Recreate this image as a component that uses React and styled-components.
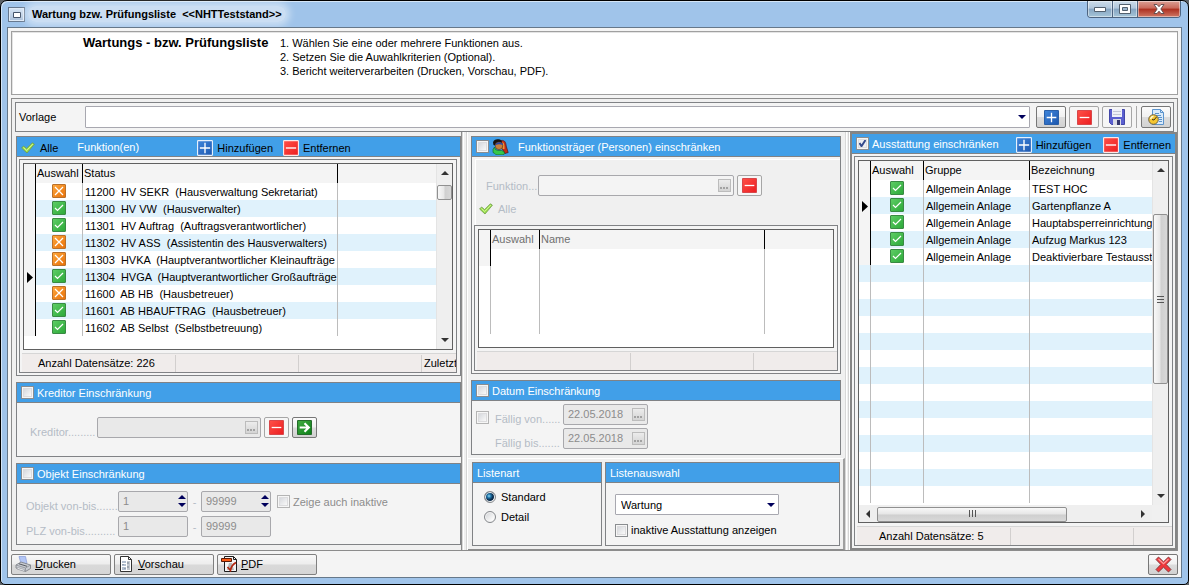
import React, { useState } from "react";
import styled, { createGlobalStyle, css } from "styled-components";

const c = {
  blue: "#419fe8",
  frame: "#a0c4ea",
  line: "#808285",
  panel: "#f4f4f4",
  face: "#f0f0f0",
  stripe: "#e0f2fc",
  off: "#b4bcc6",
};

const GlobalStyle = createGlobalStyle`
  *, *::before, *::after { box-sizing: border-box; }
  html { background: #5c6166; }
  body { margin: 0; color: #000; font: 11px/14px "Liberation Sans", Arial, sans-serif; }
  button, input, select { font: inherit; color: inherit; margin: 0; }
  button { cursor: default; }
`;

/* ---------- window frame ---------- */

const Window = styled.div`
  display: flex;
  flex-direction: column;
  min-height: 100vh;
  padding: 0 6px 6px;
  background: ${c.frame};
  border: 1px solid #000;
  border-radius: 7px 7px 5px 5px;
  box-shadow: inset 1px 1px 0 #d5e6f7;
`;

const TitleBar = styled.header`
  display: flex;
  align-items: flex-start;
  height: 26px;
`;

const SystemButton = styled.button`
  width: 17px;
  height: 15px;
  margin: 6px 3px 0 1px;
  padding: 0;
  display: grid;
  place-items: center;
  border: 1px solid #66788f;
  background: linear-gradient(#d8e6f5, #a9bfd9);
  box-shadow: inset 0 0 0 1px #dfeaf6;
`;

const Title = styled.h1`
  margin: 5px 0 0;
  padding: 0 4px;
  font-size: 11px;
  line-height: 16px;
  white-space: pre;
  border-radius: 8px;
  background: rgba(255, 255, 255, 0.45);
  box-shadow: 0 0 7px 4px rgba(255, 255, 255, 0.45);
`;

const WindowButtons = styled.div`
  display: flex;
  margin-left: auto;
  margin-right: 1px;
  border: 1px solid #4d6480;
  border-top: 0;
  border-radius: 0 0 4px 4px;
  overflow: hidden;
`;

const WindowButton = styled.button`
  width: ${(p) => (p.$danger ? 42 : 25)}px;
  height: 16px;
  padding: 0;
  display: grid;
  place-items: center;
  border: 0;
  border-right: ${(p) => (p.$danger ? 0 : 1)}px solid #4d6480;
  background: ${(p) =>
    p.$danger
      ? "linear-gradient(#dba095, #c9695a 45%, #ad2f1f 50%, #cf7865)"
      : "linear-gradient(#ccdcea, #b1c7dc 45%, #86a5c2 50%, #a5c5d8)"};
  box-shadow: inset 0 0 0 1px rgba(255, 255, 255, 0.45);
`;

const Client = styled.main`
  flex: 1;
  display: flex;
  flex-direction: column;
  padding: 3px 3px 2px;
  background: ${c.panel};
  border: 1px solid #66788a;
`;

/* ---------- intro and template row ---------- */

const Intro = styled.section`
  display: flex;
  min-height: 64px;
  padding: 4px 0 0 71px;
  background: #fff;
  border: 1px solid #a0a0a0;
  box-shadow: inset 1px 1px 0 #e4e4e4;
`;

const IntroTitle = styled.h2`
  flex: none;
  width: 197px;
  margin: 0;
  font-size: 13px;
  line-height: 14px;
`;

const Steps = styled.ol`
  margin: 0;
  padding: 0;
  list-style: none;
`;

const Workspace = styled.div`
  flex: 1;
  display: flex;
  flex-direction: column;
  margin-top: 3px;
  border: 1px solid #8c8c8c;
  background: ${c.face};
`;

const TemplateRow = styled.div`
  display: flex;
  align-items: center;
  gap: 3px;
  height: 30px;
  margin: 3px 3px 0;
  padding: 0 2px 0 3px;
  background: ${c.panel};
  border: 1px solid ${c.line};
`;

const TemplateLabel = styled.label`
  flex: none;
  width: 63px;
`;

const SelectBox = styled.div`
  position: relative;
  display: flex;
  ${(p) => p.$grow && "flex: 1; margin-right: 3px;"}
  width: ${(p) => (p.$grow ? "auto" : "164px")};
  height: ${(p) => (p.$grow ? 22 : 21)}px;

  &::after {
    content: "";
    position: absolute;
    right: 4px;
    top: 9px;
    border: 4px solid transparent;
    border-top-color: #00005c;
    border-bottom: 0;
    pointer-events: none;
  }
`;

const Select = styled.select`
  appearance: none;
  width: 100%;
  padding: 0 16px 0 5px;
  background: #fff;
  border: 1px solid #a8a8b0;
  border-radius: 1px;
`;

const Rule = styled.span`
  width: 1px;
  height: 22px;
  margin: 0 1px;
  background: #a8a8a8;
`;

const IconButton = styled.button`
  flex: none;
  width: ${(p) => (p.$wide ? 30 : 25)}px;
  height: ${(p) => (p.$wide ? 22 : 21)}px;
  padding: 0;
  display: grid;
  place-items: center;
  border: 1px solid ${(p) => (p.$strong ? "#777" : "#a6a6a6")};
  border-radius: 2px;
  background: ${(p) =>
    p.$strong ? "linear-gradient(#fbfbfb, #f1f1f1 48%, #dcdcdc 52%, #d2d2d2)" : "#f6f6f6"};
`;

/* ---------- panes and groups ---------- */

const Panes = styled.div`
  flex: 1;
  display: grid;
  grid-template-columns: minmax(0, 450fr) 6px minmax(0, 377fr) 5px minmax(0, 327fr);
`;

const LeftPane = styled.div`
  display: flex;
  flex-direction: column;
  gap: 6px;
  padding: 4px 0 3px 4px;
  border-right: 1px solid #8c8c8c;
`;

const Splitter = styled.div`
  background: ${c.face};
  border-left: 1px solid #d8d8d8;
  border-right: 1px solid #fff;
  box-shadow: inset 1px 0 0 #fff, inset -1px 0 0 #d4d4d4;
`;

const MiddlePane = styled.div`
  display: flex;
  flex-direction: column;
  gap: 6px;
  padding: 4px 4px 0 3px;
`;

const RightPane = styled.div`
  display: flex;
  flex-direction: column;
  border: 2px solid #858585;
  background: ${c.panel};
`;

const Group = styled.section`
  display: flex;
  flex-direction: column;
  background: ${c.panel};
  border: ${(p) => (p.$bare ? 0 : 1)}px solid ${c.line};
  ${(p) => p.$grow && "flex: 1;"}
  ${(p) => p.$h && `min-height: ${p.$h}px;`}
`;

const GroupHead = styled.div`
  display: flex;
  align-items: center;
  flex: none;
  height: 20px;
  padding-left: 4px;
  color: #fff;
  background: ${c.blue};
  border-bottom: 1px solid ${c.line};
  white-space: nowrap;
`;

const HeadLabel = styled.label`
  display: flex;
  padding-left: ${(p) => p.$gap ?? 3}px;
  line-height: 16px;
`;

const HeadText = styled.span`
  width: ${(p) => (p.$wide ? "120px" : "auto")};
  margin-left: ${(p) => (p.$wide ? 19 : 0)}px;
`;

const HeadButton = styled.button`
  display: flex;
  align-items: center;
  flex: none;
  gap: ${(p) => p.$gap ?? 4}px;
  height: 17px;
  margin-top: 2px;
  padding: 0;
  border: 0;
  background: none;
  color: #000;
`;

const HeadActions = styled.div`
  display: flex;
  gap: ${(p) => (p.$end ? 12 : 10)}px;
  margin-left: ${(p) => (p.$end ? "auto" : "0")};
  margin-right: 4px;
`;

const ListFrame = styled.div`
  flex: 1;
  display: flex;
  flex-direction: column;
  margin: ${(p) => p.$m ?? "2px 3px 2px 2px"};
  padding: 3px 0 0 3px;
  border: 1px solid ${c.line};
  background: ${c.panel};
`;

const ListBox = styled.div`
  flex: 1;
  display: grid;
  grid-template-columns: minmax(0, 1fr) auto;
  grid-template-rows: 1fr auto;
  min-height: ${(p) => p.$h}px;
  margin-right: 3px;
  border: 1px solid #606060;
  background: #fff;
`;

const StatusBar = styled.div`
  display: flex;
  flex: none;
  height: 19px;
  margin: 3px 0 0 -1px;
  padding-top: 1px;
  overflow: hidden;
  border-top: 1px solid #d6d6d6;
  background: #f0eceb;
`;

const StatusCell = styled.span`
  flex: none;
  width: ${(p) => p.$w}px;
  padding-left: ${(p) => p.$pad ?? 0}px;
  line-height: 17px;
  border-right: 1px solid #d2cfce;
  white-space: nowrap;
`;

/* ---------- data tables ---------- */

const Table = styled.table`
  width: 100%;
  align-self: start;
  table-layout: fixed;
  border-collapse: separate;
  border-spacing: 0;
`;

const Th = styled.th`
  height: 19px;
  padding: 0 0 1px ${(p) => (p.$mark ? 0 : 1)}px;
  font-weight: normal;
  text-align: left;
  line-height: 16px;
  white-space: nowrap;
  overflow: hidden;
  color: ${(p) => (p.$off ? "#707070" : "#000")};
  background: ${c.panel};
  border-right: ${(p) => (p.$last ? 0 : 1)}px solid #000;
`;

const Row = styled.tr`
  background: ${(p) => (p.$odd ? c.stripe : "#fff")};
`;

const Td = styled.td`
  height: 17px;
  padding: ${(p) => (p.$pad ? "2px 0 0 2px" : "0")};
  line-height: 15px;
  vertical-align: top;
  white-space: pre;
  overflow: hidden;
  border-right: ${(p) => (p.$last ? 0 : 1)}px solid #bcbcbc;
  ${(p) =>
    p.$mark &&
    css`
      vertical-align: middle;
      background: ${c.panel};
      border-right-color: #000;
    `}

  svg { display: block; margin: 1px auto 0; }
`;

/* ---------- scroll bars ---------- */

const VScroll = styled.div`
  width: 16px;
  display: flex;
  flex-direction: column;
  align-items: center;
  background: #efefef;
  border-left: 1px solid #e4e4e4;
`;

const HScroll = styled.div`
  display: flex;
  height: 17px;
  padding-top: 1px;
  align-items: center;
  background: #efefef;
`;

const Corner = styled.div`
  background: #f0f0f0;
`;

const Arrow = styled.button`
  flex: none;
  width: ${(p) => (p.$h ? 18 : 15)}px;
  height: ${(p) => (p.$h ? 15 : 18)}px;
  padding: 0;
  display: grid;
  place-items: center;
  border: 0;
  background: none;
`;

const Thumb = styled.div`
  flex: none;
  display: grid;
  place-items: center;
  border: 1px solid #909090;
  border-radius: 2px;
  ${(p) =>
    p.$h
      ? "width: 190px; height: 15px; background: linear-gradient(#f8f8f8, #e6e6e6 48%, #cfcfcf 52%, #d8d8d8);"
      : `width: 15px; height: ${p.$len}px; background: linear-gradient(90deg, #f8f8f8, #e6e6e6 48%, #cfcfcf 52%, #d8d8d8);`}
`;

const Space = styled.div`
  flex: ${(p) => (p.$size ? "none" : 1)};
  height: ${(p) => p.$size ?? 0}px;
`;

/* ---------- form parts ---------- */

const Check = styled.input.attrs({ type: "checkbox" })`
  appearance: none;
  flex: none;
  width: 13px;
  height: 13px;
  margin: 0;
  border: 1px solid ${(p) => (p.disabled ? "#b4b4b4" : "#8a8d90")};
  background: linear-gradient(135deg, #cdd0d6, #f8f8f8 80%);
  box-shadow: inset 0 0 0 1px #f6f6f6, inset 0 0 0 2px #dcdcde;

  &:checked {
    background: url("data:image/svg+xml,%3Csvg xmlns='http://www.w3.org/2000/svg' viewBox='0 0 11 11'%3E%3Cpath d='M2.5 5l2 3.2L8.5 2' fill='none' stroke='%23344a8c' stroke-width='2'/%3E%3C/svg%3E") center / 11px 11px no-repeat, #eceef2;
  }
`;

const Radio = styled.input.attrs({ type: "radio" })`
  appearance: none;
  flex: none;
  width: 12px;
  height: 12px;
  margin: 0;
  border: 1px solid #85888c;
  border-radius: 50%;
  background: linear-gradient(135deg, #cfd1d4, #fafafa 75%);
  box-shadow: inset 0 0 0 1px #f4f4f4;

  &:checked {
    background: radial-gradient(circle at 4px 4px, #8fdcf6 0, #1c6fa4 2px, #0b2c4c 4px, #0b2c4c 5px, #f4f4f4 6px);
  }
`;

const Line = styled.div`
  display: flex;
  align-items: center;
  height: 21px;
  color: ${(p) => (p.$off ? c.off : "inherit")};
`;

const Body = styled.div`
  display: flex;
  flex-direction: column;
  gap: ${(p) => p.$gap ?? 3}px;
  padding: ${(p) => p.$p};
`;

const FieldLabel = styled.label`
  flex: none;
  width: ${(p) => p.$w}px;
  padding-top: ${(p) => (p.$level ? 0 : 8)}px;
  white-space: nowrap;
`;

const Option = styled.label`
  display: flex;
  align-items: center;
  gap: ${(p) => p.$gap ?? 3}px;
  height: 20px;
  color: ${(p) => (p.$off ? "#8c8c8c" : "inherit")};
`;

const LeadCell = styled.div`
  display: flex;
  align-items: center;
  flex: none;
  width: 19px;
  padding-top: 5px;
`;

const Field = styled.div`
  position: relative;
  flex: none;
  width: ${(p) => p.$w}px;
  height: 21px;
  margin-right: ${(p) => p.$mr ?? 0}px;
`;

const Input = styled.input`
  width: 100%;
  height: 100%;
  padding: 0 4px 1px;
  color: #8c8c8c;
  background: ${(p) => (p.$light ? c.panel : "#e9e9e9")};
  border: 1px solid #a8a8ac;
  border-radius: 2px;
`;

const Ellipsis = styled.button`
  position: absolute;
  right: 3px;
  top: 4px;
  width: 13px;
  height: 13px;
  padding: 0;
  display: flex;
  align-items: flex-end;
  justify-content: center;
  border: 1px solid #bcbcbc;
  background: linear-gradient(#ececec, #d4d4d4);
`;

const Spinner = styled.div`
  position: absolute;
  right: 2px;
  top: 2px;
  display: flex;
  flex-direction: column;

  button {
    width: 9px;
    height: 8px;
    padding: 0;
    display: grid;
    place-items: center;
    border: 0;
    background: none;
  }
`;

const Dash = styled.span`
  flex: none;
  width: 13px;
  text-align: center;
`;

const FilterPanel = styled.div`
  flex: none;
  height: 66px;
  margin: 2px 0 0 3px;
  padding: 15px 0 0 10px;
  background: ${c.face};
  border: 1px solid #fff;
  border-right: 0;
  border-bottom: 0;
`;

const CheckAll = styled.button`
  display: flex;
  align-items: center;
  gap: 5px;
  margin: 6px 0 0 -7px;
  padding: 0;
  border: 0;
  background: none;
  color: ${c.off};
`;

const LowerRow = styled.div`
  flex: 1;
  display: grid;
  grid-template-columns: 130px minmax(0, 1fr);
  gap: 3px;
  margin: -3px -4px 0 -3px;
  padding: 3px 3px 3px 4px;
  border-top: 1px solid #fff;
  border-right: 2px solid #a0a0a0;
  border-bottom: 1px solid #8c8c8c;
`;

const Footer = styled.footer`
  display: flex;
  gap: 3px;
  padding-top: 3px;
`;

const ActionButton = styled.button`
  display: flex;
  align-items: center;
  gap: 3px;
  width: 100px;
  height: 21px;
  padding: 0 3px 1px;
  border: 1px solid #808080;
  border-radius: 2px;
  background: linear-gradient(#f8f8f8, #ededed 48%, #d9d9d9 52%, #d6d6d6);
`;

const CloseButton = styled(IconButton)`
  height: 21px;
  margin-left: auto;
`;

/* ---------- icons ---------- */

const Tile = ({ size = 14, from, to, edge, children }) => {
  const id = `t${from.slice(1)}`;
  return (
    <svg width={size} height={size} viewBox="0 0 14 14" aria-hidden="true">
      <defs>
        <linearGradient id={id} x1="0" y1="0" x2="1" y2="1">
          <stop offset="0" stopColor={from} />
          <stop offset="1" stopColor={to} />
        </linearGradient>
      </defs>
      <rect x="0.5" y="0.5" width="13" height="13" rx="0.5" fill={`url(#${id})`} stroke={edge} />
      <g fill="none" stroke="#fff" strokeWidth="1.2">{children}</g>
    </svg>
  );
};
const CrossTile = () => (
  <Tile from="#ffa83c" to="#e87008" edge="#b9702a"><path d="M3 3l8 8M11 3l-8 8" /></Tile>
);
const TickTile = () => (
  <Tile from="#5fce66" to="#2ba838" edge="#3a8a44"><path d="M3 7l2.500 2.500L11 4" /></Tile>
);
const PlusTile = ({ framed }) => (
  <Tile size={framed ? 16 : 15} from="#3f86dc" to="#1d57ae" edge={framed ? "#e6f0fb" : "#2a5fa8"}>
    <path d="M7 2.500v9M2.500 7h9" />
  </Tile>
);
const MinusTile = ({ framed }) => (
  <Tile size={framed ? 16 : 15} from="#ff5148" to="#ec1c20" edge={framed ? "#fbe8e8" : "#d8474a"}>
    <path d="M2.500 7h9" />
  </Tile>
);
const ArrowTile = () => (
  <Tile size={15} from="#43ad43" to="#0b7f17" edge="#256b2b">
    <path d="M2.500 7h8M7 3l4 4-4 4" strokeWidth="2" />
  </Tile>
);
const Tick = () => (
  <svg width="14" height="12" viewBox="0 0 14 12" aria-hidden="true">
    <path d="M0.600 6l2-2 3 2.600L11.400 0.800l2 1.400L6 11z" fill="#9be04c" stroke="#6f9a4c" strokeWidth="0.800" />
    <path d="M2.500 5.500l3.200 3L11.800 2" fill="none" stroke="#d2f49a" />
  </svg>
);
const Disk = () => (
  <svg width="16" height="16" viewBox="0 0 16 16" aria-hidden="true">
    <path d="M0.500 0.500h15v15h-13l-2-2z" fill="#5a5fd0" stroke="#4347a8" />
    <path d="M3 0h10v8H3z" fill="#eef0f8" />
    <path d="M4 2.500h8M4 5.500h8" stroke="#c4c7d6" />
    <path d="M4 10h8v6H4z" fill="#d9dbe6" />
    <path d="M8 11h3v5H8z" fill="#34366e" />
  </svg>
);
const Report = () => (
  <svg width="17" height="16" viewBox="0 0 17 16" aria-hidden="true">
    <path d="M4.500 0.500h8l3 3v12h-11z" fill="#d9eafa" stroke="#5b93cc" />
    <path d="M12.500 0.500v3h3M7 4.500h4M7 6.500h6M10 8.500h4M11 10.500h3M11 12.500h3" fill="none" stroke="#5b93cc" />
    <circle cx="5.500" cy="10.500" r="4.800" fill="#f5c630" stroke="#6e6244" />
    <path d="M8.500 8l-2.500 3-2-.500" fill="none" stroke="#3c3320" />
    <path d="M2.500 10a4 4 0 0 1 3-2.800" fill="none" stroke="#fff8d8" strokeWidth="1.400" />
  </svg>
);
const People = () => (
  <svg width="17" height="16" viewBox="0 0 17 16" aria-hidden="true">
    <path d="M9 1.500c4-.800 5 2.500 5.200 5.500l2 6.500-3.200 1-3-5z" fill="#c22a17" stroke="#3e0f08" strokeWidth="0.600" />
    <path d="M10.500 3c2 1 2 3.500 2 7h-2z" fill="#e8973c" />
    <path d="M1 3.500C1.500 0.500 4 0 6.500 0.200c2.500 0 3.500 1.800 3.500 3.800L3 6.500 1.500 6z" fill="#17130f" />
    <circle cx="7" cy="6.800" r="3.800" fill="#c8803c" stroke="#543016" strokeWidth="0.600" />
    <path d="M3.500 5c2-2.300 5.500-2.300 7.500 0v1c-2.500-1-5-1-7.500 0z" fill="#2d49a6" />
    <path d="M2.500 8l1 2.500 2.500 1h3.500l2.500 1 .500 2.500-1.500.800H4l-1.500-1.500-1.500-.800v-3z" fill="#35c84a" stroke="#125c1e" strokeWidth="0.600" />
  </svg>
);
const Printer = () => (
  <svg width="17" height="16" viewBox="0 0 17 16" aria-hidden="true">
    <path d="M4 0.500h6.500l1.500 7H6z" fill="#b3c6f5" stroke="#8499d8" strokeWidth="0.700" />
    <path d="M1 9l5-3 9.500 3v3.500l-5 3L1 12z" fill="#c9ccd2" stroke="#777b82" strokeWidth="0.800" />
    <path d="M1 9l9.500 3 5-3M10.500 12v3.500" fill="none" stroke="#8b8f96" strokeWidth="0.800" />
    <path d="M4 7.800l8 2.500" stroke="#555960" />
    <path d="M2 13l6.500 2 2-1-8-2.500z" fill="#f5f5f7" stroke="#8b8f96" strokeWidth="0.600" />
  </svg>
);
const Preview = () => (
  <svg width="17" height="16" viewBox="0 0 17 16" aria-hidden="true">
    <path d="M2.500 0.500h8l3 3v12h-11z" fill="#fff" stroke="#333" />
    <path d="M10.500 0.500v3h3" fill="none" stroke="#333" />
    <path d="M4 5h4v2H4zM4 8h4v2H4zM4 11h4v3H4z" fill="#b4c0d0" />
    <path d="M9 5h3v9H9z" fill="#c4c8ce" />
    <path d="M5 8v1M7 12v1M10 6v2M10 10v2" stroke="#77828f" />
  </svg>
);
const PdfIcon = () => (
  <svg width="17" height="16" viewBox="0 0 17 16" aria-hidden="true">
    <path d="M3.500 0.500h9l3 3v12h-12z" fill="#f4f4f4" stroke="#1c1c1c" />
    <path d="M12.500 0.500v3h3" fill="none" stroke="#1c1c1c" />
    <path d="M0.500 2.500h10v3h-10z" fill="#fa5a14" stroke="#5c1c08" />
    <path d="M8 7h3l2 7H6z" fill="#b5b5b5" />
    <path d="M6.500 11l3 3.500c.500-3.500 2-6 5.500-8" fill="none" stroke="#b3260f" strokeWidth="1.600" />
  </svg>
);
const RedCross = () => (
  <svg width="17" height="17" viewBox="0 0 17 17" aria-hidden="true">
    <path d="M1 3.500L3.500 1l5 4.800L13.500 1 16 3.500l-4.800 5L16 13.500 13.500 16l-5-4.800L3.500 16 1 13.500l4.800-5z" fill="#f0383c" stroke="#7c3338" strokeWidth="0.900" />
    <path d="M3.500 3l5 4.600L13.500 3" fill="none" stroke="#ff9c9c" strokeWidth="1.200" />
  </svg>
);
const Triangle = ({ dir, fill = "#333" }) => {
  const d = { up: "M0 4l4-4 4 4z", down: "M0 0h8L4 4z", left: "M4 0v8L0 4z", right: "M0 0l4 4-4 4z" }[dir];
  const flat = dir === "up" || dir === "down";
  return (
    <svg width={flat ? 8 : 4} height={flat ? 4 : 8} aria-hidden="true"><path d={d} fill={fill} /></svg>
  );
};
const Marker = () => (
  <svg width="6" height="11" aria-hidden="true"><path d="M0 0l6 5.500L0 11z" /></svg>
);
const Grip = ({ h }) => (
  <svg width="8" height="8" aria-hidden="true">
    <path d={h ? "M1.500 0v7M4.500 0v7M7.500 0v7" : "M0 1.500h7M0 4.500h7M0 7.500h7"} stroke="#555" />
  </svg>
);
const Dots = () => (
  <svg width="9" height="4" aria-hidden="true"><path d="M0 0h2v2H0zM3 0h2v2H3zM6 0h2v2H6z" fill="#a2a2a2" /></svg>
);

/* ---------- data ---------- */

const functions = [
  [false, "11200  HV SEKR  (Hausverwaltung Sekretariat)"],
  [true, "11300  HV VW  (Hausverwalter)"],
  [true, "11301  HV Auftrag  (Auftragsverantwortlicher)"],
  [false, "11302  HV ASS  (Assistentin des Hausverwalters)"],
  [false, "11303  HVKA  (Hauptverantwortlicher Kleinaufträge"],
  [true, "11304  HVGA  (Hauptverantwortlicher Großaufträge"],
  [false, "11600  AB HB  (Hausbetreuer)"],
  [true, "11601  AB HBAUFTRAG  (Hausbetreuer)"],
  [true, "11602  AB Selbst  (Selbstbetreuung)"],
];
const equipment = ["TEST HOC", "Gartenpflanze A", "Hauptabsperreinrichtung", "Aufzug Markus 123", "Deaktivierbare Testausst"];
const emptyRows = Array.from({ length: 14 }, (_, i) => i + equipment.length);

/* ---------- composed parts ---------- */

const Cols = ({ widths }) => (
  <colgroup>
    {widths.map((w, i) => <col key={i} width={w} />)}
    <col />
  </colgroup>
);

const LookupField = ({ id, w, mr, light, value = "" }) => (
  <Field $w={w} $mr={mr}>
    <Input id={id} $light={light} defaultValue={value} disabled />
    <Ellipsis disabled aria-label="Auswählen"><Dots /></Ellipsis>
  </Field>
);

const NumberField = ({ id, value, spin, label, mr }) => (
  <Field $w={70} $mr={mr}>
    <Input id={id} defaultValue={value} aria-label={label} disabled />
    {spin && (
      <Spinner>
        <button aria-label="Erhöhen"><Triangle dir="up" fill="#00005c" /></button>
        <button aria-label="Verringern"><Triangle dir="down" fill="#00005c" /></button>
      </Spinner>
    )}
  </Field>
);

const AddRemove = ({ end }) => (
  <HeadActions $end={end}>
    <HeadButton><PlusTile framed />Hinzufügen</HeadButton>
    <HeadButton><MinusTile framed />Entfernen</HeadButton>
  </HeadActions>
);

const VerticalBar = ({ before, len, grip }) => (
  <VScroll>
    <Arrow aria-label="Nach oben"><Triangle dir="up" /></Arrow>
    <Space $size={before} />
    <Thumb $len={len}>{grip && <Grip />}</Thumb>
    <Space />
    <Arrow aria-label="Nach unten"><Triangle dir="down" /></Arrow>
  </VScroll>
);

function FunctionGroup() {
  return (
    <Group $h={240}>
      <GroupHead>
        <HeadButton $gap={5}><Tick />Alle</HeadButton>
        <HeadText $wide>Funktion(en)</HeadText>
        <AddRemove />
      </GroupHead>
      <ListFrame>
        <ListBox $h={187}>
          <Table>
            <Cols widths={[12, 47, 255]} />
            <thead>
              <tr><Th $mark /><Th>Auswahl</Th><Th>Status</Th><Th $last /></tr>
            </thead>
            <tbody>
              {functions.map(([on, text], i) => (
                <Row key={text} $odd={i % 2 === 1}>
                  <Td $mark>{i === 5 && <Marker />}</Td>
                  <Td>{on ? <TickTile /> : <CrossTile />}</Td>
                  <Td $pad>{text}</Td>
                  <Td $last />
                </Row>
              ))}
            </tbody>
          </Table>
          <VerticalBar before={3} len={15} />
        </ListBox>
        <StatusBar>
          <StatusCell $w={154} $pad={16}>Anzahl Datensätze: 226</StatusCell>
          <StatusCell $w={123} />
          <StatusCell $w={123} />
          <StatusCell $w={60} $pad={2}>Zuletzt</StatusCell>
        </StatusBar>
      </ListFrame>
    </Group>
  );
}

function PersonGroup() {
  return (
    <Group $h={238}>
      <GroupHead>
        <Check id="persons" />
        <HeadLabel htmlFor="persons"><People /></HeadLabel>
        <HeadLabel htmlFor="persons" $gap={9}>Funktionsträger (Personen) einschränken</HeadLabel>
      </GroupHead>
      <FilterPanel>
        <Line $off>
          <FieldLabel htmlFor="function" $w={52} $level>Funktion...</FieldLabel>
          <LookupField id="function" w={196} mr={3} light />
          <IconButton aria-label="Funktion entfernen"><MinusTile /></IconButton>
        </Line>
        <CheckAll><Tick />Alle</CheckAll>
      </FilterPanel>
      <ListFrame $m="0 2px 2px">
        <ListBox $h={119}>
          <Table>
            <Cols widths={[12, 49, 225]} />
            <thead>
              <tr><Th $mark /><Th $off>Auswahl</Th><Th $off>Name</Th><Th $last /></tr>
            </thead>
            <tbody>
              {[0, 1, 2, 3, 4].map((i) => (
                <Row key={i}><Td $mark={i === 0} /><Td /><Td /><Td $last /></Row>
              ))}
            </tbody>
          </Table>
        </ListBox>
        <StatusBar>
          <StatusCell $w={154} />
          <StatusCell $w={123} />
        </StatusBar>
      </ListFrame>
    </Group>
  );
}

function EquipmentPane() {
  return (
    <RightPane>
      <Group $bare $grow>
        <GroupHead>
          <Check id="equipment" defaultChecked />
          <HeadLabel htmlFor="equipment">Ausstattung einschränken</HeadLabel>
          <AddRemove end />
        </GroupHead>
        <ListFrame $m="2px 2px 2px 2px">
          <ListBox $h={362}>
            <Table>
              <Cols widths={[12, 53, 106]} />
              <thead>
                <tr><Th $mark /><Th>Auswahl</Th><Th>Gruppe</Th><Th $last>Bezeichnung</Th></tr>
              </thead>
              <tbody>
                {equipment.map((name, i) => (
                  <Row key={name} $odd={i % 2 === 1}>
                    <Td $mark>{i === 1 && <Marker />}</Td>
                    <Td><TickTile /></Td>
                    <Td $pad>Allgemein Anlage</Td>
                    <Td $pad $last>{name}</Td>
                  </Row>
                ))}
                {emptyRows.map((i) => (
                  <Row key={i} $odd={i % 2 === 1}><Td /><Td /><Td /><Td $last /></Row>
                ))}
              </tbody>
            </Table>
            <VerticalBar before={35} len={170} grip />
            <HScroll>
              <Arrow $h aria-label="Nach links"><Triangle dir="left" /></Arrow>
              <Thumb $h><Grip h /></Thumb>
              <Space />
              <Arrow $h aria-label="Nach rechts"><Triangle dir="right" /></Arrow>
            </HScroll>
            <Corner />
          </ListBox>
          <StatusBar>
            <StatusCell $w={154} $pad={22}>Anzahl Datensätze: 5</StatusCell>
            <StatusCell $w={123} />
          </StatusBar>
        </ListFrame>
      </Group>
    </RightPane>
  );
}

export default function App() {
  const [kind, setKind] = useState("standard");
  return (
    <>
      <GlobalStyle />
      <Window>
        <TitleBar>
          <SystemButton aria-label="Systemmenü">
            <svg width="8" height="6" aria-hidden="true"><path d="M0.500 0.500h7v5h-7z" fill="#fff" stroke="#44546a" /></svg>
          </SystemButton>
          <Title>{"Wartung bzw. Prüfungsliste  <<NHTTeststand>>"}</Title>
          <WindowButtons>
            <WindowButton aria-label="Minimieren">
              <svg width="12" height="6" aria-hidden="true"><path d="M0.500 1.500h11v4h-11z" fill="#fff" stroke="#52606e" /></svg>
            </WindowButton>
            <WindowButton aria-label="Maximieren">
              <svg width="12" height="10" aria-hidden="true">
                <path d="M0.500 0.500h11v9h-11z" fill="#fff" stroke="#52606e" />
                <path d="M3.500 3.500h5v3h-5z" fill="#9ab5cc" stroke="#52606e" />
              </svg>
            </WindowButton>
            <WindowButton $danger aria-label="Schließen">
              <svg width="12" height="10" aria-hidden="true">
                <path d="M1 0.500h3l2 2.200 2-2.200h3L7.800 5l3.200 4.500H8L6 7.200 4 9.500H1L4.200 5z" fill="#fff" stroke="#5a4a4c" strokeWidth="0.900" />
              </svg>
            </WindowButton>
          </WindowButtons>
        </TitleBar>

        <Client>
          <Intro>
            <IntroTitle>Wartungs - bzw. Prüfungsliste</IntroTitle>
            <Steps>
              <li>1. Wählen Sie eine oder mehrere Funktionen aus.</li>
              <li>2. Setzen Sie die Auwahlkriterien (Optional).</li>
              <li>3. Bericht weiterverarbeiten (Drucken, Vorschau, PDF).</li>
            </Steps>
          </Intro>

          <Workspace>
            <TemplateRow>
              <TemplateLabel htmlFor="template">Vorlage</TemplateLabel>
              <SelectBox $grow>
                <Select id="template"><option></option></Select>
              </SelectBox>
              <IconButton $wide $strong aria-label="Vorlage hinzufügen"><PlusTile /></IconButton>
              <IconButton $wide aria-label="Vorlage entfernen"><MinusTile /></IconButton>
              <IconButton $wide aria-label="Vorlage speichern"><Disk /></IconButton>
              <Rule />
              <IconButton $wide $strong aria-label="Bericht planen"><Report /></IconButton>
            </TemplateRow>

            <Panes>
              <LeftPane>
                <FunctionGroup />
                <Group $h={75}>
                  <GroupHead>
                    <Check id="creditor-on" />
                    <HeadLabel htmlFor="creditor-on">Kreditor Einschränkung</HeadLabel>
                  </GroupHead>
                  <Body $p="14px 0 0 13px">
                    <Line $off>
                      <FieldLabel htmlFor="creditor" $w={67}>Kreditor.........</FieldLabel>
                      <LookupField id="creditor" w={164} mr={3} />
                      <Field $w={28}>
                        <IconButton aria-label="Kreditor entfernen"><MinusTile /></IconButton>
                      </Field>
                      <IconButton $strong aria-label="Kreditor öffnen"><ArrowTile /></IconButton>
                    </Line>
                  </Body>
                </Group>
                <Group $h={82}>
                  <GroupHead>
                    <Check id="object-on" />
                    <HeadLabel htmlFor="object-on">Objekt Einschränkung</HeadLabel>
                  </GroupHead>
                  <Body $p="7px 0 0 9px" $gap={4}>
                    <Line $off>
                      <FieldLabel htmlFor="object-from" $w={92}>Objekt von-bis.......</FieldLabel>
                      <NumberField id="object-from" value="1" spin />
                      <Dash>-</Dash>
                      <NumberField value="99999" label="Objekt bis" spin mr={6} />
                      <Option $off><Check disabled />Zeige auch inaktive</Option>
                    </Line>
                    <Line $off>
                      <FieldLabel htmlFor="zip-from" $w={92}>PLZ von-bis..........</FieldLabel>
                      <NumberField id="zip-from" value="1" />
                      <Dash>-</Dash>
                      <NumberField value="99999" label="PLZ bis" />
                    </Line>
                  </Body>
                </Group>
              </LeftPane>
              <Splitter />
              <MiddlePane>
                <PersonGroup />
                <Group $h={75}>
                  <GroupHead>
                    <Check id="date-on" />
                    <HeadLabel htmlFor="date-on">Datum Einschränkung</HeadLabel>
                  </GroupHead>
                  <Body $p="3px 0 0 4px">
                    <Line $off>
                      <LeadCell><Check disabled aria-label="Fällig von aktiv" /></LeadCell>
                      <FieldLabel htmlFor="due-from" $w={68}>Fällig von......</FieldLabel>
                      <LookupField id="due-from" w={85} value="22.05.2018" />
                    </Line>
                    <Line $off>
                      <LeadCell />
                      <FieldLabel htmlFor="due-to" $w={68}>Fällig bis.......</FieldLabel>
                      <LookupField id="due-to" w={85} value="22.05.2018" />
                    </Line>
                  </Body>
                </Group>
                <LowerRow>
                  <Group>
                    <GroupHead><HeadText>Listenart</HeadText></GroupHead>
                    <Body $p="4px 0 0 11px" $gap={0}>
                      <Option $gap={5}>
                        <Radio name="kind" checked={kind === "standard"} onChange={() => setKind("standard")} />
                        Standard
                      </Option>
                      <Option $gap={5}>
                        <Radio name="kind" checked={kind === "detail"} onChange={() => setKind("detail")} />
                        Detail
                      </Option>
                    </Body>
                  </Group>
                  <Group>
                    <GroupHead><HeadText>Listenauswahl</HeadText></GroupHead>
                    <Body $p="11px 0 0 9px" $gap={5}>
                      <SelectBox>
                        <Select aria-label="Listenauswahl"><option>Wartung</option></Select>
                      </SelectBox>
                      <Option><Check />inaktive Ausstattung anzeigen</Option>
                    </Body>
                  </Group>
                </LowerRow>
              </MiddlePane>
              <Splitter />
              <EquipmentPane />
            </Panes>
          </Workspace>

          <Footer>
            <ActionButton><Printer /><span><u>D</u>rucken</span></ActionButton>
            <ActionButton><Preview /><span><u>V</u>orschau</span></ActionButton>
            <ActionButton><PdfIcon /><span><u>P</u>DF</span></ActionButton>
            <CloseButton $wide $strong aria-label="Fenster schließen"><RedCross /></CloseButton>
          </Footer>
        </Client>
      </Window>
    </>
  );
}
